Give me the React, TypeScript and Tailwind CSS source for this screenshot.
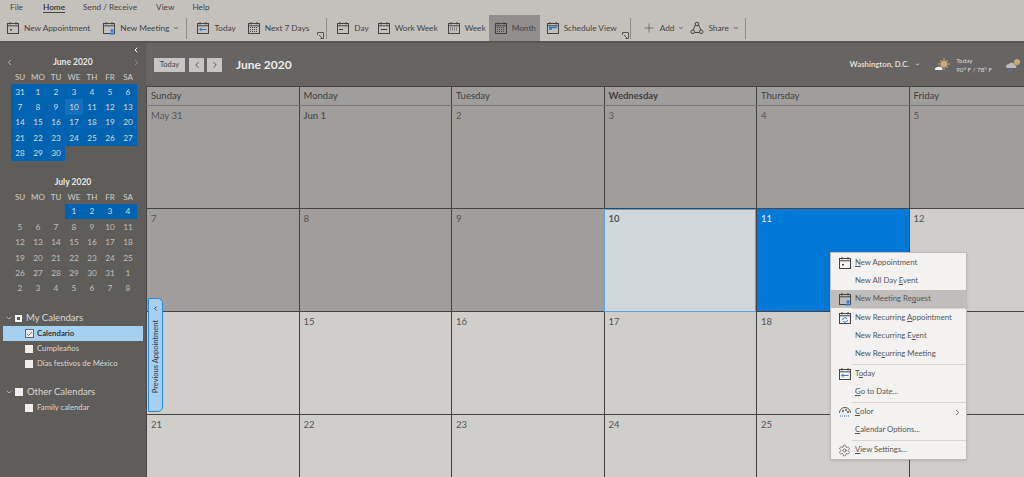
import { ChevronDown, ChevronLeft, ChevronRight, Plus, Settings, Check } from 'lucide-react';
import type { ReactNode } from 'react';

const font = { fontFamily: 'Lato, "Open Sans", sans-serif' };

const weekdays = ['SU', 'MO', 'TU', 'WE', 'TH', 'FR', 'SA'];
const juneDays = ['31', ...Array.from({ length: 30 }, (_, i) => String(i + 1))];
const julyDays = [
  '', '', '', '1', '2', '3', '4',
  '5', '6', '7', '8', '9', '10', '11',
  '12', '13', '14', '15', '16', '17', '18',
  '19', '20', '21', '22', '23', '24', '25',
  '26', '27', '28', '29', '30', '31', '1',
  '2', '3', '4', '5', '6', '7', '8',
];

const columns = ['Sunday', 'Monday', 'Tuesday', 'Wednesday', 'Thursday', 'Friday'];

// Friday 19 and 26 sit under the context menu, so they carry no label
const cells = [
  { label: 'May 31', tone: 'dark' },
  { label: 'Jun 1', tone: 'dark', bold: true },
  { label: '2', tone: 'dark' },
  { label: '3', tone: 'dark' },
  { label: '4', tone: 'dark' },
  { label: '5', tone: 'dark' },
  { label: '7', tone: 'dark' },
  { label: '8', tone: 'dark' },
  { label: '9', tone: 'dark' },
  { label: '10', tone: 'today', bold: true },
  { label: '11', tone: 'selected' },
  { label: '12', tone: 'light' },
  { label: '', tone: 'light' },
  { label: '15', tone: 'light' },
  { label: '16', tone: 'light' },
  { label: '17', tone: 'light' },
  { label: '18', tone: 'light' },
  { label: '', tone: 'light' },
  { label: '21', tone: 'light' },
  { label: '22', tone: 'light' },
  { label: '23', tone: 'light' },
  { label: '24', tone: 'light' },
  { label: '25', tone: 'light' },
  { label: '', tone: 'light' },
];

const toneClass: Record<string, string> = {
  dark: 'bg-[#a09e9c]',
  light: 'bg-[#d0cecb]',
  today: 'bg-[#d0d7db] outline outline-1 -outline-offset-1 outline-[#5fa3dc]',
  selected: 'bg-[#0078d7]',
};

function CalIcon({ kind = 'blank', className = '' }: { kind?: string; className?: string }) {
  return (
    <svg viewBox="0 0 14 14" width="14" height="14" className={`shrink-0 ${className}`} fill="none">
      <rect x="1.5" y="2.5" width="11" height="10" fill="none" stroke="#444" />
      <path d="M1.5 4.8H12.5M4 1v2.5M10 1v2.5" stroke="#444" />
      {kind === 'dot' && <rect x="4" y="8" width="2" height="1.5" fill="#444" />}
      {kind === 'today' && <path d="M3.5 8.5h7M5.5 7l-2 1.5 2 1.5" stroke="#2b7cd3" />}
      {kind === 'week' && <path d="M3 7h8M3 9h8" stroke="#555" strokeDasharray="1 1" />}
      {kind === 'month' && <path d="M3 6.5h8M3 8.5h8M3 10.5h8" stroke="#444" strokeDasharray="1 1" />}
      {kind === 'day' && <path d="M3 8.5h4" stroke="#444" />}
      {kind === 'work' && <path d="M4 8.5h6" stroke="#444" />}
      {kind === 'schedule' && <path d="M3 6.5h8M3 8h3" stroke="#2b7cd3" strokeWidth="1.5" />}
      {kind === 'meeting' && (
        <>
          <circle cx="10" cy="9.5" r="1.5" fill="#2b7cd3" />
          <path d="M7.5 13.5c0-3 5-3 5 0" fill="#2b7cd3" />
        </>
      )}
      {kind === 'recur' && <path d="M4.5 9a2.5 2.5 0 0 1 4.5-1.2M9.5 9a2.5 2.5 0 0 1-4.5 1.2" stroke="#2b7cd3" />}
    </svg>
  );
}

function Launcher() {
  return (
    <svg viewBox="0 0 7 7" width="7" height="7" className="self-end mb-[2px] shrink-0" fill="none">
      <path d="M.5 3V.5H6.5V6.5H3.5M2 3l3 3" stroke="#555" />
    </svg>
  );
}

function RibbonSep({ className = '' }: { className?: string }) {
  return <div className={`w-px h-[21px] bg-[#8f8d8b] shrink-0 ${className}`} />;
}

function RibbonButton({ icon, label, className = '', caret }: { icon: ReactNode; label: string; className?: string; caret?: boolean }) {
  return (
    <div className={`flex items-center gap-[4px] shrink-0 whitespace-nowrap text-[8.25px] text-[#444] ${className}`}>
      {icon}
      <span>{label}</span>
      {caret && <ChevronDown size={6} strokeWidth={3} className="text-[#444]" />}
    </div>
  );
}

function MiniMonth({ title, days, blueFrom, blueTo, leftArrow }: { title: string; days: string[]; blueFrom: number; blueTo: number; leftArrow?: boolean }) {
  return (
    <div>
      <div className="h-[14px] flex items-center justify-between px-[5px] relative">
        {leftArrow ? <ChevronLeft size={9} className="text-[#d8d6d4]" /> : <span />}
        <span className="text-[8.5px] font-bold text-[#e8e6e4]">{title}</span>
        {leftArrow ? <ChevronRight size={9} className="text-[#a8a6a4]" /> : <span />}
      </div>
      <div className="grid grid-cols-[repeat(7,18px)] ml-[11px] mt-[1px] h-[14px] items-center">
        {weekdays.map(d => (
          <span key={d} className="text-center text-[8px] text-[#d0cecc]">{d}</span>
        ))}
      </div>
      <div className="grid grid-cols-[repeat(7,18px)] auto-rows-[15.4px] ml-[11px]">
        {days.map((d, i) => {
          const blue = i >= blueFrom && i <= blueTo;
          const current = blue && d === '10';
          return (
            <span
              key={i}
              className={`flex items-center justify-center text-[8.25px] ${current ? 'bg-[#1470bd] text-[#dcdcdc]' : blue ? 'bg-[#0063b1] text-[#dcdcdc]' : 'text-[#c0bebc]'}`}
            >
              {d}
            </span>
          );
        })}
      </div>
    </div>
  );
}

function Box({ checked }: { checked?: boolean }) {
  return (
    <span className={`shrink-0 flex items-center justify-center bg-[#eeedec] ${checked ? 'w-[9px] h-[9px] border border-[#666]' : 'w-[8px] h-[8px]'}`}>
      {checked && <Check size={8} strokeWidth={2.5} className="text-[#444]" />}
    </span>
  );
}

function MenuItem({ icon, label, hover, arrow }: { icon?: ReactNode; label: ReactNode; hover?: boolean; arrow?: boolean }) {
  return (
    <div className={`h-[18px] flex items-center text-[7.75px] text-[#555] whitespace-nowrap ${hover ? 'bg-[#c0bebc]' : ''}`}>
      <span className="w-[24px] flex justify-center pl-[3px] shrink-0">{icon}</span>
      <span>{label}</span>
      {arrow && <ChevronRight size={9} className="ml-auto mr-[4px] text-[#444]" />}
    </div>
  );
}

function MenuSep({ tight }: { tight?: boolean }) {
  return <div className={`h-px bg-[#d8d6d4] ml-[21px] ${tight ? '' : 'my-[0.5px]'}`} />;
}

function U({ children }: { children: string }) {
  return <span className="underline">{children}</span>;
}

export default function App() {
  return (
    <div style={font} className="w-[1024px] h-[477px] overflow-hidden relative flex flex-col bg-[#5f5d5a]">
      {/* Tabs */}
      <div className="h-[15px] bg-[#c4c1bd] flex items-center text-[8.25px] text-[#444] pl-[10px] shrink-0">
        <span>File</span>
        <span className="ml-[20px] relative font-semibold text-[#333]">
          Home
          <span className="absolute left-0 right-0 top-[11px] h-[1px] bg-[#444]" />
        </span>
        <span className="ml-[18px]">Send / Receive</span>
        <span className="ml-[19px]">View</span>
        <span className="ml-[18px]">Help</span>
      </div>

      {/* Ribbon */}
      <div className="h-[26px] bg-[#c4c1bd] border-b-2 border-[#555] box-content flex items-center pl-[6px] shrink-0">
        <RibbonButton icon={<CalIcon kind="dot" />} label="New Appointment" />
        <RibbonButton icon={<CalIcon kind="meeting" />} label="New Meeting" className="ml-[12px]" caret />
        <RibbonSep className="ml-[7px]" />
        <RibbonButton icon={<CalIcon kind="today" />} label="Today" className="ml-[9px]" />
        <RibbonButton icon={<CalIcon kind="month" />} label="Next 7 Days" className="ml-[11px]" />
        <span className="ml-[8px] flex self-stretch"><Launcher /></span>
        <RibbonSep className="ml-[2px]" />
        <RibbonButton icon={<CalIcon kind="day" />} label="Day" className="ml-[9px]" />
        <RibbonButton icon={<CalIcon kind="work" />} label="Work Week" className="ml-[8px]" />
        <RibbonButton icon={<CalIcon kind="week" />} label="Week" className="ml-[9px]" />
        <RibbonButton icon={<CalIcon kind="month" />} label="Month" className="ml-[3px] self-stretch w-[51px] pl-[5px] bg-[#918f8d]" />
        <RibbonButton icon={<CalIcon kind="schedule" />} label="Schedule View" className="ml-[6px]" />
        <span className="ml-[5px] flex self-stretch"><Launcher /></span>
        <RibbonSep className="ml-[1px]" />
        <RibbonButton icon={<Plus size={14} strokeWidth={1} className="text-[#444]" />} label="Add" className="ml-[11px]" caret />
        <RibbonButton
          icon={
            <svg viewBox="0 0 14 14" width="14" height="14" fill="none" stroke="#444">
              <circle cx="7" cy="3" r="1.8" />
              <circle cx="2.8" cy="10.8" r="1.8" />
              <circle cx="11.2" cy="10.8" r="1.8" />
              <path d="M5.5 4 3 9M8.5 4 11 9M4.8 11.5h4.4" />
            </svg>
          }
          label="Share"
          className="ml-[6px]"
          caret
        />
        <RibbonSep className="ml-[6px]" />
      </div>

      <div className="flex-1 flex min-h-0">
        {/* Sidebar */}
        <aside className="w-[146px] shrink-0 bg-[#5f5d5a] flex flex-col relative">
          <ChevronLeft size={8} strokeWidth={3} className="absolute right-[6px] top-[3px] text-white" />
          <div className="mt-[12px]">
            <MiniMonth title="June 2020" days={juneDays} blueFrom={0} blueTo={30} leftArrow />
          </div>
          <div className="mt-[14px]">
            <MiniMonth title="July 2020" days={julyDays} blueFrom={3} blueTo={6} />
          </div>
          <div className="mt-[14px] text-[#d8d6d4]">
            <div className="h-[16px] flex items-center pl-[5px] gap-[2px] text-[9.5px]">
              <ChevronDown size={8} />
              <span className="w-[7px] h-[7px] border-2 border-[#f3f2f1] shrink-0" />
              <span className="ml-[2px]">My Calendars</span>
            </div>
            <div className="h-[15px] ml-[3px] w-[140px] bg-[#a6d0f0] flex items-center pl-[22px] gap-[3px] text-[7.75px] font-bold text-[#333]">
              <Box checked />
              <span>Calendario</span>
            </div>
            <div className="h-[15px] flex items-center pl-[25px] gap-[4px] text-[7.75px]">
              <Box />
              <span>Cumpleaños</span>
            </div>
            <div className="h-[15px] flex items-center pl-[25px] gap-[4px] text-[7.75px]">
              <Box />
              <span>Días festivos de México</span>
            </div>
            <div className="h-[16px] mt-[13px] flex items-center pl-[5px] gap-[2px] text-[9.5px]">
              <ChevronDown size={8} />
              <span className="w-[8px] h-[8px] bg-[#eeedec] shrink-0" />
              <span className="ml-[2px]">Other Calendars</span>
            </div>
            <div className="h-[15px] flex items-center pl-[25px] gap-[4px] text-[7.75px]">
              <Box />
              <span>Family calendar</span>
            </div>
          </div>
        </aside>

        {/* Calendar */}
        <main className="flex-1 min-w-0 flex flex-col bg-[#555]">
          <header className="h-[43px] bg-[#666564] flex items-center shrink-0 pl-[8px]">
            <span className="w-[31px] h-[14px] bg-[#c8c6c4] flex items-center justify-center text-[7.5px] text-[#444]">Today</span>
            <span className="ml-[4px] w-[15px] h-[14px] bg-[#c8c6c4] flex items-center justify-center"><ChevronLeft size={10} className="text-[#444]" /></span>
            <span className="ml-[3px] w-[15px] h-[14px] bg-[#c8c6c4] flex items-center justify-center"><ChevronRight size={10} className="text-[#444]" /></span>
            <span className="ml-[14px] text-[12px] font-bold text-[#eeecea]">June 2020</span>
            <span className="ml-auto text-[7.75px] font-bold text-[#dddbd9] whitespace-nowrap">Washington, D.C.</span>
            <ChevronDown size={5} strokeWidth={4} className="ml-[6px] text-[#dddbd9]" />
            <svg viewBox="0 0 16 14" width="16" height="14" className="ml-[14px] shrink-0">
              <circle cx="10" cy="6" r="3.5" fill="#c8a878" />
              <path d="M10 0v2M10 10v2M4 6h2M14 6h2M6 2l1.5 1.5M14 2l-1.5 1.5M14 10l-1.5-1.5" stroke="#c8a878" />
              <path d="M1 12a2.5 2.5 0 0 1 3-3 3 3 0 0 1 4.5 3z" fill="#eee" />
            </svg>
            <div className="ml-[6px] text-[6.25px] leading-[9px] text-[#dddbd9] whitespace-nowrap">
              <div>Today</div>
              <div>90° F / 78° F</div>
            </div>
            <svg viewBox="0 0 16 14" width="16" height="14" className="ml-[13px] mr-[3px] shrink-0">
              <circle cx="12" cy="4" r="3" fill="#c8a878" />
              <path d="M1 9a3 3 0 0 1 3-3 3.5 3.5 0 0 1 6 1 2 2 0 0 1 1 3H2z" fill="#bbb" />
              <path d="M4 11v3M6.5 11v3" stroke="#2b7cd3" />
            </svg>
          </header>

          <div className="grid grid-cols-[repeat(6,152.5px)] border-t border-[#444] h-[19px] shrink-0 bg-[#a09e9c]">
            {columns.map(c => (
              <div key={c} className={`border-l border-[#444] pl-[4px] flex items-center text-[9.5px] text-[#3f3f3f] ${c === 'Wednesday' ? 'font-bold' : ''}`}>
                {c}
              </div>
            ))}
          </div>

          <div className="grid grid-cols-[repeat(6,152.5px)] auto-rows-[103px] border-t border-[#777]">
            {cells.map((cell, i) => (
              <div key={i} className={`${toneClass[cell.tone]} border-l border-b border-[#444] pl-[4px] pt-[2px] text-[9.5px] leading-[16px] ${cell.tone === 'selected' ? 'text-[#e8f0f8]' : 'text-[#555]'} ${cell.bold ? 'font-bold text-[#333]' : ''}`}>
                {cell.label}
              </div>
            ))}
          </div>
        </main>
      </div>

      {/* Previous appointment tab */}
      <div className="absolute left-[148px] top-[298px] w-[15px] h-[114px] bg-[#a6d0f0] border border-[#2b88d8] rounded-r-[5px] flex flex-col items-center">
        <ChevronLeft size={7} strokeWidth={3} className="mt-[6px] text-[#333]" />
        <span className="mt-[8px] [writing-mode:vertical-rl] rotate-180 text-[7.5px] text-[#333] whitespace-nowrap">Previous Appointment</span>
      </div>

      {/* Context menu */}
      <div className="absolute left-[830px] top-[252px] w-[137px] h-[208px] bg-[#f3f2f1] border border-[#bbb] shadow-sm pt-[1px]">
        <MenuItem icon={<CalIcon kind="dot" />} label={<><U>N</U>ew Appointment</>} />
        <MenuItem label={<>New All Day <U>E</U>vent</>} />
        <MenuItem hover icon={<CalIcon kind="meeting" />} label={<>New Meeting Re<U>q</U>uest</>} />
        <MenuSep tight />
        <MenuItem icon={<CalIcon kind="recur" />} label={<>New Recurring <U>A</U>ppointment</>} />
        <MenuItem label={<>New Recurring E<U>v</U>ent</>} />
        <MenuItem label={<>New Re<U>c</U>urring Meeting</>} />
        <MenuSep />
        <MenuItem icon={<CalIcon kind="today" />} label={<>T<U>o</U>day</>} />
        <MenuItem label={<><U>G</U>o to Date...</>} />
        <MenuSep />
        <MenuItem
          icon={
            <svg viewBox="0 0 14 14" width="14" height="14" fill="none" stroke="#555">
              <path d="M1.5 8a5.5 5.5 0 0 1 11 0" />
              <path d="M2 11h10" stroke="#2b7cd3" strokeDasharray="1 1" />
              <circle cx="5" cy="6" r=".7" />
              <circle cx="8" cy="5" r=".7" />
              <circle cx="10" cy="7" r=".7" />
            </svg>
          }
          label={<><U>C</U>olor</>}
          arrow
        />
        <MenuItem label={<><U>C</U>alendar Options...</>} />
        <MenuSep />
        <MenuItem icon={<Settings size={13} strokeWidth={1.2} className="text-[#444]" />} label={<><U>V</U>iew Settings...</>} />
      </div>
    </div>
  );
}
